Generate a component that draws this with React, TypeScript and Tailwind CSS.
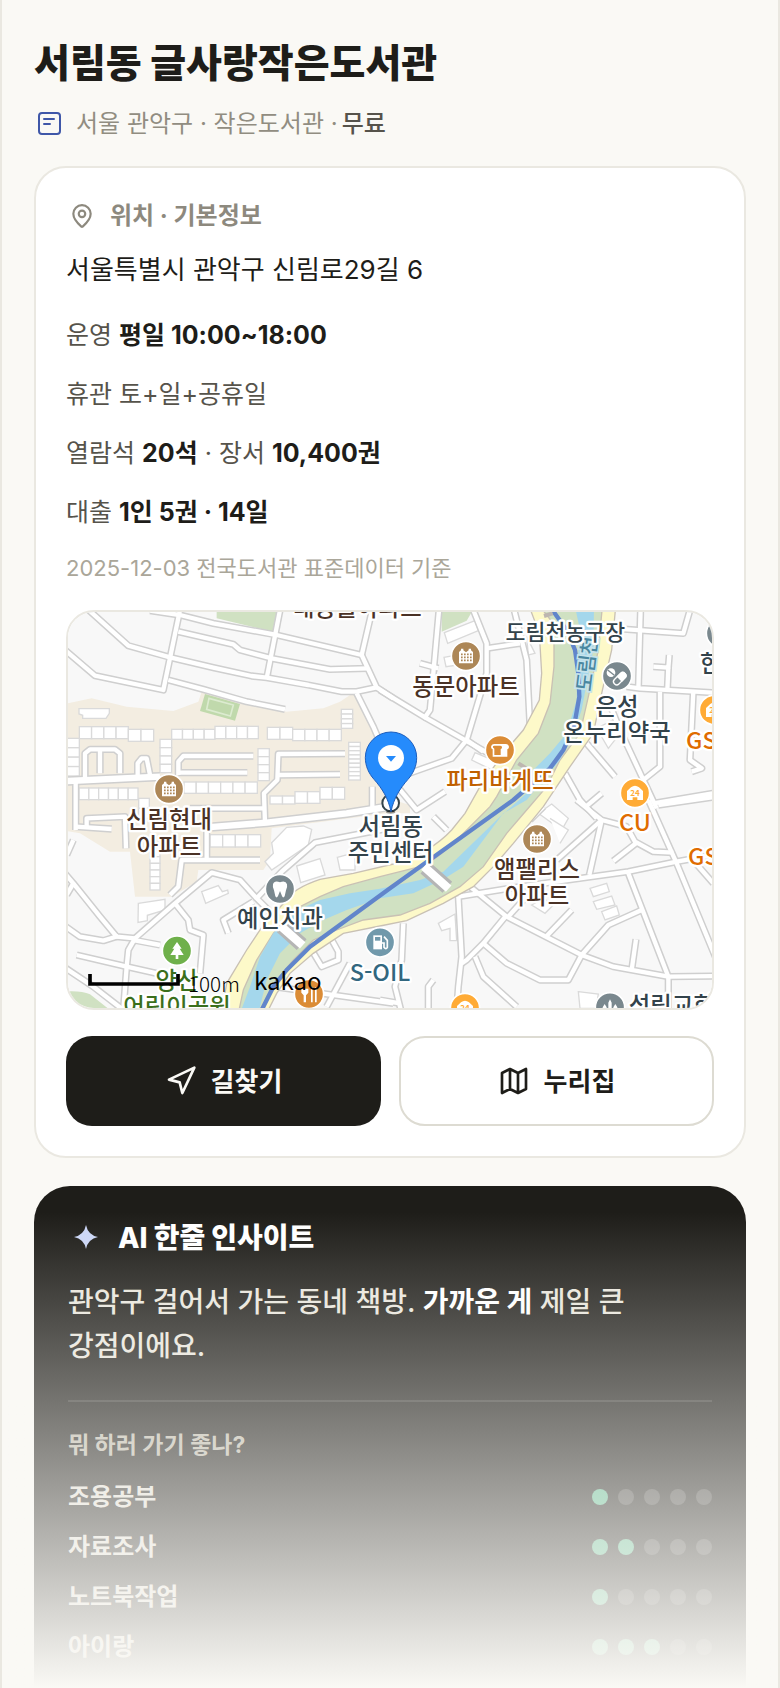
import { MapPin, Navigation } from "lucide-react";
import type { ReactNode } from "react";

type Tile = {
  x: number;
  y: number;
  roads: string[];
};

type Purpose = {
  label: string;
  score: number;
};

const purposes: Purpose[] = [
  { label: "조용공부", score: 1 },
  { label: "자료조사", score: 2 },
  { label: "노트북작업", score: 1 },
  { label: "아이랑", score: 3 },
];

// Road centre lines, one entry for each quarter of the map
const tiles: Tile[] = [
  {
    x: 0,
    y: 0,
    roads: [
      "75,20 205,137 330,172 460,203 575,228 620,233 745,255 845,275 890,275 950,262",
      "10,146 105,227 310,270 362,20",
      "270,32 360,45 460,70 650,105 905,165 935,36",
      "355,95 520,133 540,150 635,175 810,208 925,205",
      "325,240 430,268 560,305 675,328",
      "662,20 620,235",
      "905,165 950,262 1000,295",
      "890,280 940,380 970,450",
      "75,535 75,460 90,448 165,448 180,460 180,520",
      "120,450 120,520",
      "233,525 233,490 245,475 260,475 270,525",
      "47,545 47,690",
      "355,525 355,485 370,468 580,468",
      "355,518 562,518",
      "615,670 612,580 652,540 655,462 855,461",
      "655,525 840,523",
      "937,560 937,630",
      "390,625 610,625",
    ],
  },
  {
    x: 960,
    y: 0,
    roads: [
      "178,20 150,330 135,352 0,270",
      "280,30 320,130 320,220 260,420 215,475 60,530",
      "320,145 420,130",
      "400,20 440,180 450,380",
      "120,190 175,205",
      "135,352 325,460",
      "260,420 310,455",
      "782,20 775,270",
      "700,85 910,100 930,30",
      "740,260 780,265 1000,278",
      "820,200 865,203 868,165",
      "865,203 862,270",
      "680,290 720,390 830,625",
      "840,275 840,500 790,540",
      "940,275 930,480 965,505 935,515",
      "620,430 705,530",
      "555,520 600,600 650,655",
      "615,622 665,580",
      "820,610 1000,580",
      "40,545 110,630 195,575",
      "450,660 490,620",
    ],
  },
  {
    x: 0,
    y: 600,
    roads: [
      "440,65 440,180",
      "47,80 155,87",
      "80,85 80,55 195,50 198,145",
      "600,180 365,180 355,260 330,285",
      "1000,82 765,128 665,215 590,295 720,425",
      "590,295 540,240 455,218 345,310 225,415 170,410 120,350 40,250 10,215",
      "225,415 205,450 200,500 190,630",
      "10,375 60,410 130,422 175,408",
      "345,310 385,360 390,390 430,405 420,520",
      "50,465 200,500 290,520",
      "220,420 300,435",
      "10,500 100,560 190,630",
      "580,305 490,360 505,400",
      "755,450 785,500 835,480 835,455 810,410",
      "870,490 800,620",
      "640,560 1000,610",
      "20,165 40,120",
      "20,285 40,250",
    ],
  },
  {
    x: 960,
    y: 600,
    roads: [
      "805,0 890,190 1010,480",
      "835,15 1010,-10",
      "590,0 640,40 665,60 740,80 765,125 820,155 880,158",
      "665,60 628,225",
      "665,60 530,180",
      "235,290 420,260 745,215 890,185 1000,165",
      "930,170 1000,250",
      "700,183 768,130",
      "745,220 865,530 865,640",
      "235,290 245,470 235,560 230,630",
      "270,260 380,350 605,465 700,500 865,530 1010,528",
      "380,345 310,430 260,480 245,490",
      "310,430 380,490 480,540 565,540 605,465 685,375 785,330",
      "500,408 575,330",
      "755,510 768,418",
      "285,470 310,530 410,620",
      "385,350 430,300",
      "70,370 65,480 45,560 65,640",
      "0,600 60,610",
      "145,640 145,560 160,540",
      "160,50 200,90",
      "240,600 300,640",
    ],
  },
];

const Roads = ({ className, width }: { className: string; width: number }) => (
  <g
    className={className}
    fill="none"
    strokeWidth={width}
    strokeLinejoin="round"
  >
    {tiles.map((tile) => (
      <g key={`${tile.x}-${tile.y}`} transform={`translate(${tile.x} ${tile.y})`}>
        {tile.roads.map((points) => (
          <polyline key={points} points={points} />
        ))}
      </g>
    ))}
  </g>
);

// Row (or column) of equal houses
const Houses = ({
  x,
  y,
  w,
  h,
  count,
  vertical = false,
}: {
  x: number;
  y: number;
  w: number;
  h: number;
  count: number;
  vertical?: boolean;
}) => (
  <g>
    {Array.from({ length: count }, (_, i) => (
      <rect
        key={i}
        x={vertical ? x : x + (i * w) / count}
        y={vertical ? y + (i * h) / count : y}
        width={vertical ? w : w / count}
        height={vertical ? h / count : h}
      />
    ))}
  </g>
);

const Poi = ({
  x,
  y,
  color,
  children,
}: {
  x: number;
  y: number;
  color: string;
  children?: ReactNode;
}) => (
  <g transform={`translate(${x} ${y})`}>
    <circle r="44" fill={color} stroke="#fff" strokeWidth="5" />
    {children}
  </g>
);

const ApartmentGlyph = () => (
  <g>
    <path d="M-21 22V-12l6-5v-5h7v5l8 6 8-6v-5h7v5l6 5v34z" fill="#fff" />
    <path
      d="M-15 -5h32M-15 4h32M-15 13h32"
      stroke="#ad8757"
      strokeWidth="5"
      strokeDasharray="5 4"
    />
  </g>
);

const StoreGlyph = () => (
  <g>
    <path
      d="M-24 -6L-12 -17q12 -10 24 0L24 -6V21H7v-8h-14v8h-17z"
      fill="#fff"
    />
    <text
      y="9"
      textAnchor="middle"
      fontSize="24"
      fontWeight="700"
      fill="#ffab36"
    >
      24
    </text>
  </g>
);

const PlaceName = ({
  x,
  y,
  color,
  size = 70,
  children,
}: {
  x: number;
  y: number;
  color: string;
  size?: number;
  children: string;
}) => (
  <text
    x={x}
    y={y}
    fill={color}
    stroke="#fff"
    strokeWidth="14"
    strokeLinejoin="round"
    paintOrder="stroke"
    textAnchor="middle"
    fontSize={size}
    fontWeight="500"
  >
    {children}
  </text>
);

const LibraryMap = () => (
  <svg
    viewBox="24 36 1932 1188"
    preserveAspectRatio="xMidYMid slice"
    role="img"
    aria-label="지도"
    className="block h-full w-full font-['Noto_Sans_CJK_KR','Noto_Sans',sans-serif]"
  >
    <rect x="0" y="0" width="2000" height="1260" fill="#f8f8f8" />

    {/* Apartment blocks */}
    <path
      fill="#f3ede1"
      d="M0 315L95 295L200 320L340 333L415 305L425 275L530 305L680 335L790 325L840 305L870 285H890L960 420L1000 600L1050 615V640L985 640L635 685L630 780L610 810H415L410 845L335 890H225L210 755H150L60 700L0 690Z"
    />

    {/* Parks */}
    <g fill="#d0e1c2">
      <path d="M470 20H660L645 97L470 55Z" />
      <path d="M1145 20H1245L1220 62L1145 95Z" />
      <path d="M0 1176Q60 1170 90 1183L150 1230H0Z" />
    </g>
    <path d="M435 282L540 312L525 362L420 333Z" fill="#c0d9ac" />
    <path
      d="M447 295L520 315L511 348L440 328Z"
      fill="none"
      stroke="#dcebd0"
      strokeWidth="5"
    />

    {/* Buildings */}
    <g fill="#fff" stroke="#dadada" strokeWidth="4">
      <path d="M57 326H148V340L138 355H68V346L57 342Z" />
      <Houses x={58} y={380} w={147} h={36} count={4} />
      <Houses x={205} y={388} w={76} h={36} count={2} />
      <Houses x={335} y={388} w={130} h={30} count={4} />
      <Houses x={465} y={379} w={130} h={37} count={4} />
      <Houses x={622} y={382} w={76} h={36} count={2} />
      <Houses x={698} y={388} w={146} h={34} count={4} />
      <Houses x={844} y={328} w={34} h={57} count={4} vertical />
      <Houses x={866} y={427} w={35} h={113} count={9} vertical />
      <Houses x={594} y={446} w={34} h={96} count={4} vertical />
      <Houses x={20} y={415} w={38} h={113} count={4} vertical />
      <Houses x={300} y={418} w={35} h={100} count={4} vertical />
      <Houses x={57} y={564} w={177} h={35} count={6} />
      <Houses x={372} y={546} w={220} h={34} count={6} />
      <Houses x={630} y={588} w={75} h={24} count={2} />
      <Houses x={705} y={575} w={75} h={35} count={2} />
      <Houses x={780} y={562} w={74} h={36} count={2} />
      <Houses x={236} y={595} w={32} h={60} count={2} vertical />
      <Houses x={450} y={704} w={152} h={37} count={4} />
      <Houses x={270} y={750} w={30} h={120} count={6} vertical />
      <path d="M235 910L315 898V930L262 946V962L234 967Z" />
      <path d="M425 875L475 857L487 875L503 870L505 880L437 910Z" />
      <path d="M680 682L730 678L755 688L745 735L635 810L615 785L640 760L635 728Z" />
      <path d="M710 798L780 776L795 825L722 848Z" />
      <path d="M832 772L885 758V810H840Z" />
      <path d="M1153 98L1245 62L1255 92L1163 130Z" />
      <path d="M1152 172L1190 165L1195 195L1158 200Z" />
      <path d="M1235 480L1245 458L1310 485L1300 512Z" />
      <path d="M1400 110L1425 160L1405 165Z" />
      <path d="M1610 385L1660 360L1680 400L1645 445Z" />
      <path d="M1475 612L1525 655L1505 690L1435 640Z" />
      <path d="M1470 655L1525 690L1500 730" />
      <path d="M1590 865L1640 850L1648 875L1600 890Z" />
      <path d="M1600 905L1655 888L1665 915L1610 928Z" />
      <path d="M1625 935L1670 918L1678 945L1635 960Z" />
      <path d="M1135 970L1185 942L1190 1022H1170V985L1145 992Z" />
      <path d="M1555 1175L1615 1182L1608 1225H1560Z" />
      <path d="M1415 915L1450 895L1480 915L1455 940Z" />
    </g>

    <Roads className="stroke-[#cfcfcf]" width={22} />
    <path
      d="M0 544L300 530M440 682L620 668L860 640L1000 618"
      stroke="#cfcfcf"
      strokeWidth="28"
      fill="none"
    />
    <Roads className="stroke-white" width={13} />
    <path
      d="M0 544L300 530M440 682L620 668L860 640L1000 618"
      stroke="#fff"
      strokeWidth="19"
      fill="none"
    />

    {/* Stream with its banks */}
    <path
      fill="#fdf9c9"
      stroke="#c9c1b4"
      strokeWidth="4"
      d="M1408 20L1438 100L1445 220L1438 300L1390 390L1330 460L1260 560L1215 640L1175 690Q1110 760 1000 792L880 820L780 838Q700 865 680 900L610 975L560 1050L500 1150L485 1240H620L650 1180L690 1120L760 1060L850 1000L960 978L1040 962L1150 910L1240 860L1300 800L1360 730L1450 620L1530 500L1600 400L1625 280L1655 150L1667 20Z"
    />
    <path
      fill="#d0e1c2"
      stroke="#c9c1b4"
      strokeWidth="4"
      d="M1440 20L1472 60L1482 100L1482 200L1470 310L1435 400L1370 480L1310 590L1290 620L1200 710Q1130 780 1080 800L960 830L850 860L780 890L700 930L640 1000L590 1080L550 1170L535 1240H600L650 1140L700 1080L760 1020L830 990L910 960L1020 945L1110 910L1200 860L1270 800L1340 700L1400 630L1460 560L1500 480L1560 400L1585 290L1615 150L1627 20Z"
    />
    <path
      fill="#a4d7ec"
      d="M1545 20L1560 90L1552 200L1550 300L1520 400L1470 460L1410 520L1400 580L1320 650L1150 815L1080 840L960 866L870 880L780 900L715 930L640 1000L600 1070L570 1160L540 1240H595L620 1140L660 1060L720 1000L790 960L860 930L960 895L1060 880L1150 838L1210 800L1330 640L1400 600L1500 480L1540 400L1565 330L1580 250L1600 150L1602 20Z"
    />
    <path
      d="M1470 20L1520 90L1545 150L1555 220L1558 290L1542 380L1510 450L1470 505L1360 600L990 865L750 1040L680 1110L640 1160L600 1240"
      fill="none"
      stroke="#6185cb"
      strokeWidth="13"
      strokeLinejoin="round"
    />
    {/* Bridges */}
    <path d="M665 980L725 1034M1096 804L1162 862" stroke="#b5b5b5" strokeWidth="44" />
    <path d="M662 978L728 1036M1092 800L1166 866" stroke="#fff" strokeWidth="25" />
    <path d="M1375 490L1400 506M1452 48L1478 40" stroke="#bdb6b0" strokeWidth="12" />

    <text
      transform="translate(1592 276) rotate(-83)"
      fill="#4a87a0"
      stroke="#c6e3ec"
      strokeWidth="10"
      paintOrder="stroke"
      fontSize="60"
      fontWeight="500"
    >
      도림천
    </text>

    <PlaceName x={892} y={48} color="#4a3226">대동슬아파트</PlaceName>
    <PlaceName x={1516} y={120} size={65} color="#33434b">도림천농구장</PlaceName>

    <Poi x={1218} y={168} color="#ad8757">
      <ApartmentGlyph />
    </Poi>
    <PlaceName x={1218} y={284} color="#4a3226">동문아파트</PlaceName>

    <Poi x={1671} y={228} color="#7a888e">
      <g transform="rotate(-45)" fill="none" stroke="#fff" strokeWidth="4">
        <rect x="-22" y="2" width="44" height="19" rx="9" />
        <path d="M0 2h13a9 9 0 0 1 0 19H0z" fill="#fff" />
      </g>
      <circle cx="-18" cy="-10" r="13" fill="#fff" />
      <path d="M-28 -18L-8 -2" stroke="#7a888e" strokeWidth="4" />
    </Poi>
    <PlaceName x={1671} y={344} color="#33434b">은성</PlaceName>
    <PlaceName x={1671} y={424} color="#33434b">온누리약국</PlaceName>

    <Poi x={1320} y={450} color="#db8c36">
      <path
        d="M-22 20V-2q-7-4-4-11 2-5 8-5h36q6 0 8 5 3 7-4 11V20z"
        fill="#fff"
      />
      <path d="M-17 15V-4q-6-3-4-7 1-2 4-2H0q5 0 6 4 1 4-4 7V15z" fill="#db8c36" />
    </Poi>
    <PlaceName x={1320} y={567} color="#c06000">파리바게뜨</PlaceName>

    <Poi x={1725} y={579} color="#ffab36">
      <StoreGlyph />
    </Poi>
    <PlaceName x={1725} y={694} color="#df6c00">CU</PlaceName>

    <Poi x={1983} y={100} color="#7a888e" />
    <PlaceName x={1952} y={216} color="#33434b">한</PlaceName>
    <Poi x={1962} y={330} color="#ffab36">
      <StoreGlyph />
    </Poi>
    <PlaceName x={1964} y={448} color="#df6c00">GS25</PlaceName>
    <PlaceName x={1970} y={794} color="#df6c00">GS25</PlaceName>

    <Poi x={1431} y={717} color="#ad8757">
      <ApartmentGlyph />
    </Poi>
    <PlaceName x={1431} y={834} color="#4a3226">앰팰리스</PlaceName>
    <PlaceName x={1431} y={913} color="#4a3226">아파트</PlaceName>

    <Poi x={327} y={567} color="#ad8757">
      <ApartmentGlyph />
    </Poi>
    <PlaceName x={327} y={684} color="#4a3226">신림현대</PlaceName>
    <PlaceName x={327} y={764} color="#4a3226">아파트</PlaceName>

    <Poi x={660} y={867} color="#7a888e">
      <path
        d="M-21-14q4-13 21-6 17-7 21 6 2 9-3 18l-4 18q-5 7-8-1L0 6l-6 15q-4 8-8 1l-4-18q-5-9-3-18z"
        fill="#fff"
      />
    </Poi>
    <PlaceName x={660} y={982} color="#33434b">예인치과</PlaceName>

    <Poi x={960} y={1027} color="#7199ab">
      <rect x="-20" y="-21" width="26" height="42" fill="#fff" />
      <rect x="-15" y="-16" width="16" height="11" fill="#7199ab" />
      <path
        d="M6 2h6V15q6 8 10 0V-6L12-17"
        fill="none"
        stroke="#fff"
        strokeWidth="5"
      />
    </Poi>
    <PlaceName x={960} y={1142} color="#32677f">S-OIL</PlaceName>

    <Poi x={351} y={1052} color="#6fb04b">
      <path d="M0-26L14-6H8L20 13H4V25H-4V13H-20L-8-6H-14z" fill="#fff" />
    </Poi>
    <PlaceName x={351} y={1167} color="#3b6f1c">양산</PlaceName>
    <PlaceName x={351} y={1246} color="#3b6f1c">어린이공원</PlaceName>

    <Poi x={747} y={1182} color="#db8c36">
      <path d="M-23-16H-2V-4L-9 4V25H-16V4L-23-4zM6-20H11V25H6zM18-20H23V25H18z" fill="#fff" />
    </Poi>
    <Poi x={1215} y={1224} color="#ffab36">
      <StoreGlyph />
    </Poi>
    <Poi x={1650} y={1222} color="#7a888e">
      <path d="M-5 22V-14L0-24L5-14V22zM-22 20V0L-16-10L-10 0V20zM10 20V0L16-10L22 0V20z" fill="#fff" />
    </Poi>
    <PlaceName x={1835} y={1242} color="#33434b">성림교회</PlaceName>

    {/* Selected place */}
    <circle cx="992" cy="609" r="25" fill="#fff" stroke="#33434b" strokeWidth="6" />
    <PlaceName x={992} y={704} color="#33434b">서림동</PlaceName>
    <PlaceName x={992} y={784} color="#33434b">주민센터</PlaceName>
    <ellipse cx="992" cy="636" rx="14" ry="5" fill="#000" opacity="0.35" />
    <path
      d="M993 635C985 595 966 565 942 538C926 520 916 498 916 473A77 77 0 0 1 1070 473C1070 498 1060 520 1044 538C1020 565 1001 595 993 635Z"
      fill="#258bfc"
      stroke="#1b5dbd"
      strokeWidth="3"
    />
    <circle cx="993" cy="474" r="39" fill="#fff" />
    <path d="M978 468H1008L993 485Z" fill="#258bfc" />

    {/* Scale */}
    <path d="M90 1122V1152H354V1122" fill="none" stroke="#000" strokeWidth="11" />
    <text x="384" y="1176" fontSize="62" fontWeight="300" fill="#000">
      100m
    </text>
    <text x="582" y="1170" fontSize="72" fontWeight="400" fill="#000">
      kakao
    </text>
  </svg>
);

const InfoRow = ({ children }: { children: ReactNode }) => (
  <p className="text-[25px] leading-[59px] text-[#56534b]">{children}</p>
);

const Strong = ({ children }: { children: ReactNode }) => (
  <strong className="font-bold text-[#1e1d19]">{children}</strong>
);

const ScoreDots = ({ score }: { score: number }) => (
  <div className="flex gap-[10px]" role="img" aria-label={`5점 중 ${score}점`}>
    {[1, 2, 3, 4, 5].map((n) => (
      <span
        key={n}
        className={`size-4 rounded-full ${
          n <= score ? "bg-[#5bb88d]" : "bg-white/18"
        }`}
      />
    ))}
  </div>
);

export default function App() {
  return (
    <main
      lang="ko"
      className="relative flex min-h-screen flex-col overflow-hidden border-x-2 border-[#eae8e1] bg-[#faf9f5] px-8 font-[Inter,'Noto_Sans_CJK_KR',sans-serif] text-[#1e1d19]"
    >
      <header className="pt-9">
        <h1 className="text-[39px] leading-[54px] font-extrabold">
          서림동 글사랑작은도서관
        </h1>
        <div className="mt-4 flex h-9 items-center">
          <svg
            viewBox="0 0 30 30"
            className="size-[30px] shrink-0"
            fill="none"
            stroke="#3f57a8"
            strokeWidth="2"
            strokeLinecap="round"
            aria-hidden="true"
          >
            <rect x="5" y="4" width="21" height="21" rx="3" />
            <path d="M10 10H20M10 15H16" />
          </svg>
          <p className="ml-3 text-[24px] leading-9 text-[#918d81]">
            서울 관악구 · 작은도서관 ·
          </p>
          <span className="ml-1 text-[24px] leading-9 font-medium text-[#56534b]">
            무료
          </span>
        </div>
      </header>

      <section className="mt-6 rounded-[32px] border-2 border-[#eae8e1] bg-white p-[30px]">
        <h2 className="flex h-9 items-center gap-3 text-[24px] leading-9 font-bold text-[#8d897e]">
          <span className="flex w-8 justify-center">
            <MapPin size={26} strokeWidth={2} aria-hidden="true" />
          </span>
          위치 · 기본정보
        </h2>
        <p className="mt-4 text-[26px] leading-10">
          서울특별시 관악구 신림로29길 6
        </p>
        <div className="mt-4">
          <InfoRow>
            운영 <Strong>평일 10:00~18:00</Strong>
          </InfoRow>
          <InfoRow>휴관 토+일+공휴일</InfoRow>
          <InfoRow>
            열람석 <Strong>20석</Strong> · 장서 <Strong>10,400권</Strong>
          </InfoRow>
          <InfoRow>
            대출 <Strong>1인 5권 · 14일</Strong>
          </InfoRow>
        </div>
        <p className="mt-2 text-[22px] leading-9 text-[#aaa699]">
          2025-12-03 전국도서관 표준데이터 기준
        </p>
        <div className="mt-6 h-[400px] overflow-hidden rounded-[28px] border-2 border-[#eae8e1]">
          <LibraryMap />
        </div>
        <div className="mt-[26px] grid grid-cols-2 gap-[18px]">
          <button
            type="button"
            className="flex h-[90px] items-center justify-center gap-[14px] rounded-[26px] bg-[#1e1d19] text-[26px] font-bold text-[#faf9f5]"
          >
            <Navigation size={32} strokeWidth={2} aria-hidden="true" />
            길찾기
          </button>
          <button
            type="button"
            className="flex h-[90px] items-center justify-center gap-[14px] rounded-[26px] border-2 border-[#dddbd2] bg-white text-[26px] font-bold"
          >
            <svg
              viewBox="0 0 24 24"
              className="size-8"
              fill="none"
              stroke="currentColor"
              strokeWidth="2"
              strokeLinejoin="round"
              aria-hidden="true"
            >
              <path d="M3 6l6-3 6 3 6-3v15l-6 3-6-3-6 3zM9 3v15M15 6v15" />
            </svg>
            누리집
          </button>
        </div>
      </section>

      <section className="mt-7 flex-1 rounded-t-[36px] bg-[#1e1d19] px-[34px] pt-[34px] pb-3">
        <h2 className="flex h-9 items-center gap-[14px] text-[28px] leading-9 font-extrabold text-white">
          <svg viewBox="0 0 36 36" className="size-9" aria-hidden="true">
            <path
              d="M18 5Q20 15 30 17Q20 19 18 29Q16 19 6 17Q16 15 18 5Z"
              fill="#cbd6f6"
            />
          </svg>
          AI 한줄 인사이트
        </h2>
        <p className="mt-6 text-[28px] leading-[44px] font-medium break-keep text-[#e8e5dc]">
          관악구 걸어서 가는 동네 책방.{" "}
          <strong className="font-bold text-white">가까운 게</strong> 제일 큰
          강점이에요.
        </p>
        <div className="mt-8 border-t-2 border-white/12 pt-[25px]">
          <h3 className="text-[23px] leading-9 font-bold text-[#bab6a8]">
            뭐 하러 가기 좋나?
          </h3>
          <ul className="mt-[9px]">
            {purposes.map((purpose) => (
              <li
                key={purpose.label}
                className="flex h-[50px] items-center justify-between text-[24px] font-semibold text-[#e0ddd4]"
              >
                {purpose.label}
                <ScoreDots score={purpose.score} />
              </li>
            ))}
          </ul>
        </div>
      </section>

      {/* Fade over the lower part of the page */}
      <div className="pointer-events-none absolute -inset-x-0.5 bottom-0 h-[476px] bg-linear-to-b from-[#faf9f5]/0 to-[#faf9f5]" />
    </main>
  );
}
